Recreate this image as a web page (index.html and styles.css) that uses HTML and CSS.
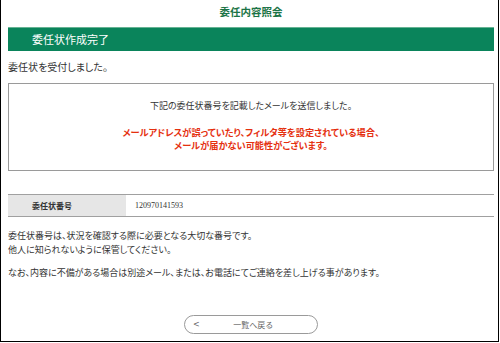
FILE: index.html
```html
<!DOCTYPE html>
<html lang="ja">
<head>
<meta charset="UTF-8">
<meta name="viewport" content="width=device-width, initial-scale=1.0">
<title>委任内容照会</title>
<link rel="stylesheet" href="styles.css">
</head>
<body>

<div class="frame">
  <h1 class="page-title">委任内容照会</h1>

  <div class="section-bar">委任状作成完了</div>

  <p class="lead">委任状を受付しました。</p>

  <div class="notice">
    <p class="notice-text">下記の委任状番号を記載したメールを送信しました。</p>
    <p class="notice-warn">メールアドレスが誤っていたり、フィルタ等を設定されている場合、<br>メールが届かない可能性がございます。</p>
  </div>

  <table class="info">
    <tr>
      <th>委任状番号</th>
      <td>120970141593</td>
    </tr>
  </table>

  <div class="note">
    <p>委任状番号は、状況を確認する際に必要となる大切な番号です。<br>他人に知られないように保管してください。</p>
    <p>なお、内容に不備がある場合は別途メール、または、お電話にてご連絡を差し上げる事があります。</p>
  </div>

  <div class="actions">
    <button class="back-btn" type="button">
      <span class="back-arrow">&lt;</span>
      <span class="back-label">一覧へ戻る</span>
    </button>
  </div>
</div>

</body>
</html>
```

FILE: styles.css
```css
/* Page frame */
body {
  margin: 0;
  background: #fff;
  font-family: "Noto Sans CJK JP", sans-serif;
  color: #333;
}

.frame {
  box-sizing: border-box;
  width: 499px;
  height: 342px;
  border: 1px solid #000;
  border-top: none;
  padding: 0 4px 0 7px;
  font-feature-settings: "palt";
}

/* Heading */
.page-title {
  margin: 0 0 9px;
  padding-top: 6px;
  font-size: 10.5px;
  line-height: 12px;
  font-weight: bold;
  text-align: center;
  color: #1b7446;
}

.section-bar {
  height: 24px;
  line-height: 24px;
  padding-left: 24px;
  background: #0a845b;
  box-shadow: inset 0 1px #66b393;
  color: #fff;
  font-size: 11px;
}

.lead {
  margin: 8px 0 8px;
  font-size: 10px;
  line-height: 16px;
}

/* Notice box */
.notice {
  border: 1px solid #9a9a9a;
  padding: 15px 0 18px;
  text-align: center;
  font-size: 9.2px;
}

.notice p {
  margin: 0;
}

.notice-text {
  font-size: 9px;
  line-height: 14px;
}

.notice-warn {
  margin-top: 13px !important;
  line-height: 13px;
  font-weight: bold;
  color: #e5300f;
}

/* Number table */
.info {
  width: 100%;
  margin-top: 23px;
  border-collapse: collapse;
  border-top: 1px solid #a0a0a0;
  border-bottom: 1px solid #a0a0a0;
}

.info th,
.info td {
  height: 21px;
  padding: 0;
  text-align: left;
}

.info th {
  width: 118px;
  padding-left: 24px;
  box-sizing: border-box;
  background: #e6e6e6;
  font-size: 8px;
  font-weight: bold;
}

.info td {
  padding-left: 9px;
  font-family: "Liberation Serif", serif;
  font-size: 8px;
}

/* Notes */
.note {
  margin-top: 12px;
  font-size: 9px;
  line-height: 14px;
}

.note p {
  margin: 0 0 9px;
}

/* Back button */
.actions {
  display: flex;
  justify-content: center;
  margin-top: 35px;
}

.back-btn {
  display: flex;
  align-items: center;
  width: 134px;
  height: 19px;
  padding: 0 10px 0 8px;
  border: 1px solid #9a9a9a;
  border-radius: 10px;
  background: #fff;
  color: #666;
  font-family: inherit;
  cursor: pointer;
}

.back-arrow {
  font-family: "DejaVu Sans", sans-serif;
  font-size: 8px;
}

.back-label {
  flex: 1;
  text-align: center;
  font-size: 8px;
}
```
